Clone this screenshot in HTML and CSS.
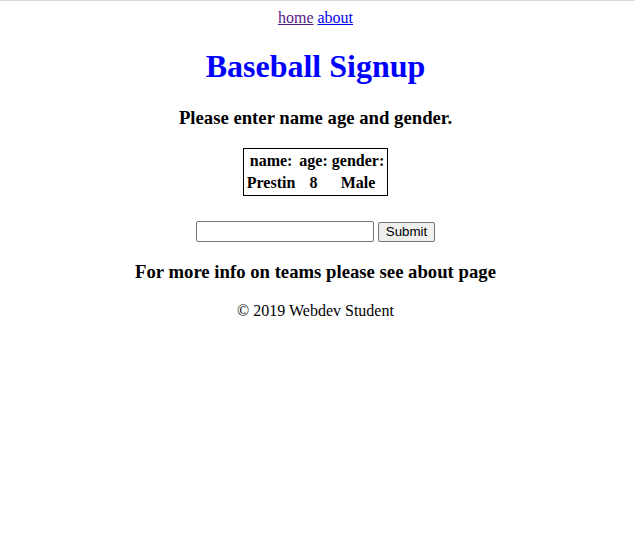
FILE: index.html
```html
<!DOCTYPE html>
<html>
<head>
<meta charset="utf-8">
<title>Baseball Signup</title>
<link rel="stylesheet" href="styles.css">
</head>
<body>
<div class="nav"><a class="visited" href="#">home</a> <a href="#about">about</a></div>
<h1 class="title">Baseball Signup</h1>
<h3 class="prompt">Please enter name age and gender.</h3>
<table class="roster">
  <tr><th>name:</th><th>age:</th><th>gender:</th></tr>
  <tr><td>Prestin</td><td>8</td><td>Male</td></tr>
</table>
<form class="signup">
  <input class="field" type="text"> <input class="btn" type="submit" value="Submit">
</form>
<h3 class="info">For more info on teams please see about page</h3>
<p class="footer">© 2019 Webdev Student</p>
</body>
</html>
```
FILE: styles.css
```css
html {
  border-top: 1px solid #dadada;
}
body {
  margin: 8px 12px 8px 8px;
  font-family: "Liberation Serif", "Times New Roman", serif;
  font-size: 16px;
  text-align: center;
  color: #000;
}
.nav a {
  color: #0000ee;
}
.nav a.visited {
  color: #551a8b;
}
.title {
  color: #0000ff;
  font-size: 32px;
  margin: 21.44px 0;
}
.prompt, .info {
  font-size: 18.72px;
  margin: 18.72px 0;
}
.roster {
  margin: 0 auto;
  border: 1px solid #000;
  border-spacing: 2px;
}
.roster th, .roster td {
  padding: 1px;
  font-weight: bold;
}
.signup {
  margin: 0;
  padding-top: 25px;
  line-height: 19px;
}
.field {
  width: 172px;
  height: 17px;
  padding: 1px 2px;
  border: 1px solid #767676;
  border-radius: 2px;
  font-family: "Liberation Sans", Arial, sans-serif;
  font-size: 13.33px;
  vertical-align: middle;
}
.btn {
  font-family: "Liberation Sans", Arial, sans-serif;
  font-size: 13.33px;
  padding: 1px 7px;
  border: 1px solid #767676;
  border-radius: 2px;
  background: #efefef;
  height: 20px;
  vertical-align: middle;
}
.footer {
  margin: 16px 0;
}
```
